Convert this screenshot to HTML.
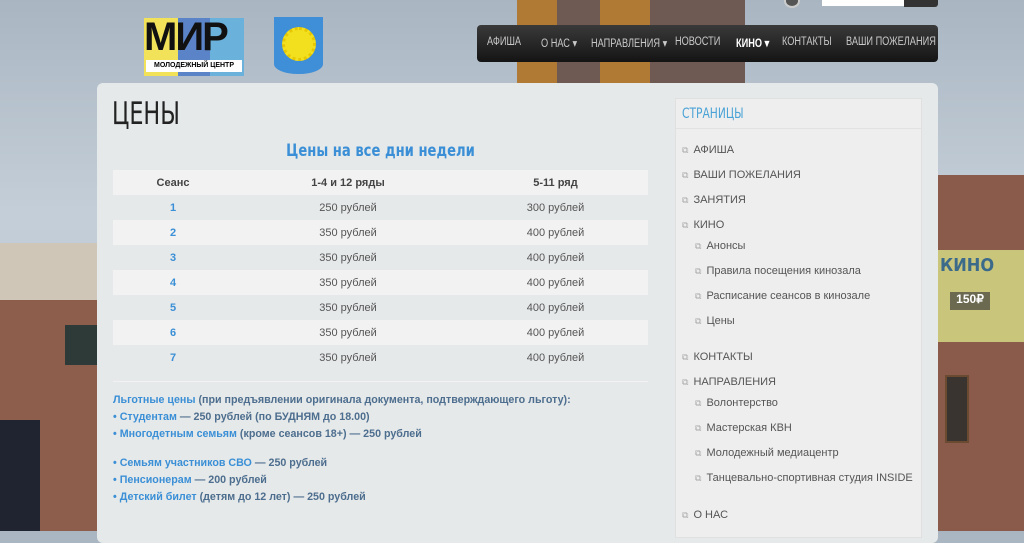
<!DOCTYPE html>
<html><head><meta charset="utf-8"><style>
*{margin:0;padding:0;box-sizing:border-box}
body{width:1024px;height:531px;overflow:hidden;position:relative;font-family:"Liberation Sans",sans-serif;background:linear-gradient(#a9b6c2,#c4ced8 40%,#b9c3cc)}
.abs{position:absolute}
.cond{font-family:"DejaVu Sans Condensed","Liberation Sans",sans-serif;}
.nav a{position:absolute;top:36px;font-size:11.5px;color:#c9c9c9;transform:scaleX(.8);transform-origin:left;white-space:nowrap;letter-spacing:0}
.side{font-size:11px;color:#555;white-space:nowrap}
.side span{position:absolute;white-space:nowrap}
.side span:before{content:"⧉";color:#aaa;font-size:9px;margin-right:5px}
table{border-collapse:collapse;width:535px;font-size:11px;color:#555}
td{height:25px;text-align:center}
td:first-child{color:#3a8fd6;font-weight:bold}
tr:nth-child(odd) td{background:#f2f2f2}
.ben{font-size:10.7px;font-weight:bold;color:#4d6e8e;line-height:17px}
.ben b{color:#3a8fd6}
</style></head><body>
<div class="abs" style="left:517px;top:0;width:228px;height:84px;background:#6e5a52"></div>
<div class="abs" style="left:517px;top:0;width:40px;height:84px;background:#b07a35"></div>
<div class="abs" style="left:600px;top:0;width:50px;height:84px;background:#b07a35"></div>
<div class="abs" style="left:0;top:243px;width:100px;height:60px;background:#cfc6b8"></div>
<div class="abs" style="left:0;top:300px;width:100px;height:231px;background:#8e5e4c"></div>
<div class="abs" style="left:65px;top:325px;width:32px;height:40px;background:#2d3a38"></div>
<div class="abs" style="left:0;top:420px;width:40px;height:111px;background:#1f2430"></div>
<div class="abs" style="left:937px;top:175px;width:87px;height:356px;background:#8a5a4a"></div>
<div class="abs" style="left:937px;top:250px;width:87px;height:92px;background:#c9c57a"></div>
<div class="abs cond" style="left:940px;top:255px;font-size:18px;font-weight:bold;color:#3c6a8a">КИНО</div>
<div class="abs" style="left:950px;top:292px;width:40px;height:18px;background:#6b6a50;color:#fff;font-size:12px;font-weight:bold;text-align:center">150₽</div>
<div class="abs" style="left:945px;top:375px;width:24px;height:68px;background:#3a3430;border:2px solid #6a4a30"></div>
<div class="abs" style="left:144px;top:18px;width:100px;height:58px;background:#f1e25a"></div>
<div class="abs" style="left:178px;top:18px;width:66px;height:58px;background:#5a83c8"></div>
<div class="abs" style="left:210px;top:18px;width:34px;height:58px;background:#6ab2dc"></div>
<div class="abs" style="left:144px;top:15px;font-size:40px;font-weight:bold;color:#111;letter-spacing:-2px">МИР</div>
<div class="abs" style="left:146px;top:60px;width:96px;height:12px;background:#fff;font-size:7px;font-weight:bold;line-height:12px;text-align:center">МОЛОДЕЖНЫЙ ЦЕНТР</div>
<div class="abs" style="left:274px;top:17px;width:49px;height:57px;background:#3e8ed8;border-radius:0 0 24px 24px/0 0 10px 10px"></div>
<div class="abs" style="left:282px;top:27px;width:34px;height:34px;border-radius:50%;background:#f2df1e;border:3px dotted #e7c800"></div>
<div class="abs" style="left:784px;top:-6px;width:16px;height:14px;border-radius:50%;background:#555;border:2px solid #ccc"></div>
<div class="abs" style="left:822px;top:0;width:82px;height:6px;background:#fff"></div>
<div class="abs" style="left:904px;top:0;width:34px;height:7px;background:#333;border-radius:0 0 3px 0"></div>
<div class="abs nav" style="left:477px;top:25px;width:461px;height:37px;background:linear-gradient(#3a3a3a,#141414);border-radius:4px">
<a style="left:10px;top:11px">АФИША</a>
<a style="left:64px;top:11px">О НАС ▾</a>
<a style="left:114px;top:11px">НАПРАВЛЕНИЯ ▾</a>
<a style="left:198px;top:11px">НОВОСТИ</a>
<a style="left:259px;top:11px;color:#fff;font-weight:bold">КИНО ▾</a>
<a style="left:305px;top:11px">КОНТАКТЫ</a>
<a style="left:369px;top:11px">ВАШИ ПОЖЕЛАНИЯ</a>
</div>
<div class="abs" style="left:97px;top:83px;width:841px;height:460px;background:#e6e9ea;border-radius:6px"></div>
<div class="abs cond" style="left:112px;top:96px;font-size:31px;color:#222;transform:scaleX(.8);transform-origin:left">ЦЕНЫ</div>
<div class="abs cond" style="left:113px;top:141px;width:535px;text-align:center;font-size:17px;font-weight:bold;color:#3a8fd6;transform:scaleX(.86)">Цены на все дни недели</div>
<div class="abs" style="left:113px;top:170px">
<table>
<tr><td style="color:#444;width:120px">Сеанс</td><td style="font-weight:bold;color:#444;width:230px">1-4 и 12 ряды</td><td style="font-weight:bold;color:#444">5-11 ряд</td></tr>
<tr><td>1</td><td>250 рублей</td><td>300 рублей</td></tr>
<tr><td>2</td><td>350 рублей</td><td>400 рублей</td></tr>
<tr><td>3</td><td>350 рублей</td><td>400 рублей</td></tr>
<tr><td>4</td><td>350 рублей</td><td>400 рублей</td></tr>
<tr><td>5</td><td>350 рублей</td><td>400 рублей</td></tr>
<tr><td>6</td><td>350 рублей</td><td>400 рублей</td></tr>
<tr><td>7</td><td>350 рублей</td><td>400 рублей</td></tr>
</table></div>
<div class="abs" style="left:113px;top:381px;width:535px;height:1px;background:#f2f2f2"></div>
<div class="abs ben" style="left:113px;top:392px">
<div><b>Льготные цены</b> (при предъявлении оригинала документа, подтверждающего льготу):</div>
<div><b>• Студентам</b> — 250 рублей (по БУДНЯМ до 18.00)</div>
<div><b>• Многодетным семьям</b> (кроме сеансов 18+) — 250 рублей</div>
<div style="margin-top:12px"><b>• Семьям участников СВО</b> — 250 рублей</div>
<div><b>• Пенсионерам</b> — 200 рублей</div>
<div><b>• Детский билет</b> (детям до 12 лет) — 250 рублей</div>
</div>
<div class="abs" style="left:675px;top:98px;width:247px;height:440px;background:#eeeeee;border:1px solid #e0e0e0"></div>
<div class="abs" style="left:676px;top:128px;width:245px;height:1px;background:#e2e2e2"></div>
<div class="abs cond" style="left:682px;top:106px;font-size:14px;color:#4aa3d6;transform:scaleX(.85);transform-origin:left">СТРАНИЦЫ</div>
<div class="side">
<span style="left:682px;top:144px">АФИША</span>
<span style="left:682px;top:169px">ВАШИ ПОЖЕЛАНИЯ</span>
<span style="left:682px;top:194px">ЗАНЯТИЯ</span>
<span style="left:682px;top:219px">КИНО</span>
<span style="left:695px;top:240px">Анонсы</span>
<span style="left:695px;top:265px">Правила посещения кинозала</span>
<span style="left:695px;top:290px">Расписание сеансов в кинозале</span>
<span style="left:695px;top:315px">Цены</span>
<span style="left:682px;top:351px">КОНТАКТЫ</span>
<span style="left:682px;top:376px">НАПРАВЛЕНИЯ</span>
<span style="left:695px;top:397px">Волонтерство</span>
<span style="left:695px;top:422px">Мастерская КВН</span>
<span style="left:695px;top:447px">Молодежный медиацентр</span>
<span style="left:695px;top:472px">Танцевально-спортивная студия INSIDE</span>
<span style="left:682px;top:509px">О НАС</span>
</div>
</body></html>
